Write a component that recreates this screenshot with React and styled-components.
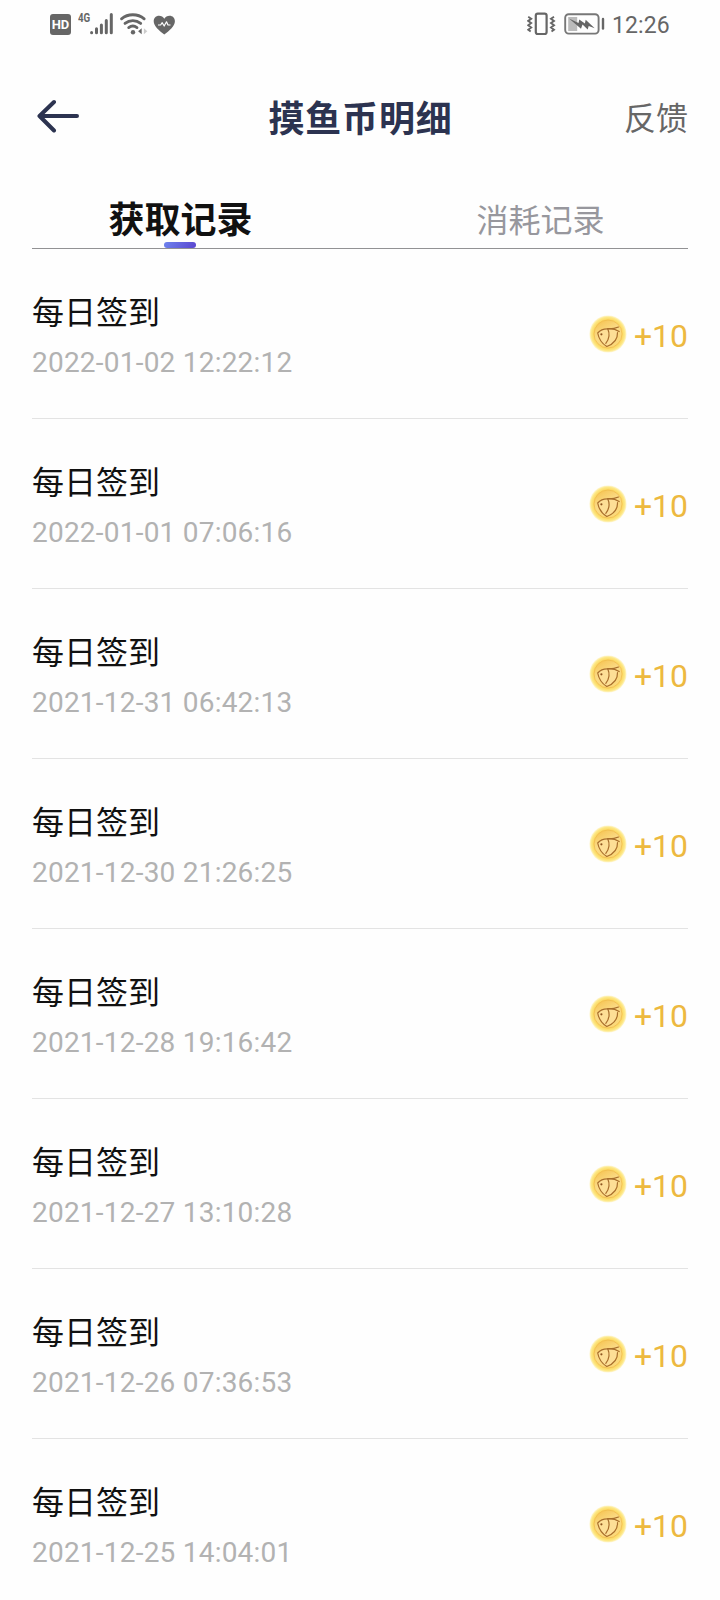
import styled, { createGlobalStyle } from "styled-components";

const records = [
  { id: 1, title: "每日签到", time: "2022-01-02 12:22:12", amount: 10 },
  { id: 2, title: "每日签到", time: "2022-01-01 07:06:16", amount: 10 },
  { id: 3, title: "每日签到", time: "2021-12-31 06:42:13", amount: 10 },
  { id: 4, title: "每日签到", time: "2021-12-30 21:26:25", amount: 10 },
  { id: 5, title: "每日签到", time: "2021-12-28 19:16:42", amount: 10 },
  { id: 6, title: "每日签到", time: "2021-12-27 13:10:28", amount: 10 },
  { id: 7, title: "每日签到", time: "2021-12-26 07:36:53", amount: 10 },
  { id: 8, title: "每日签到", time: "2021-12-25 14:04:01", amount: 10 },
];

const SignalIcons = () => (
  <svg width="85" height="26" viewBox="0 0 85 26" fill="none">
    <g stroke="#666" strokeWidth="3" strokeLinecap="round">
      <path d="M1.600 21.600v.2M6.500 17.800v4M11.400 14v7.800M16.300 9.400v12.400M21.300 3.600v18.200" />
    </g>
    <g stroke="#666" strokeWidth="2.800" strokeLinecap="round">
      <path d="M31.500 7.800c6.500-5.400 16.200-5.400 22.700 0" />
      <path d="M35 12.400c4.600-3.800 11.100-3.800 15.700 0" />
      <path d="M38.700 16.600c2.600-2 5.700-2 8.300 0" />
    </g>
    <circle cx="43" cy="21.200" r="2.200" fill="#666" />
    <path d="M51.700 17.300v6l-3.600-3z" fill="#666" />
    <path d="M53.900 17.300v6l3.400-3z" fill="#ccc" />
    <path
      d="M74.300 23.600C69 19.500 63.700 15 63.700 10.200c0-3.200 2.400-5.400 5.300-5.400 2.300 0 4.200 1.200 5.300 3 1.100-1.800 3-3 5.300-3 2.900 0 5.300 2.200 5.300 5.400 0 4.800-5.300 9.300-10.600 13.400z"
      fill="#666"
    />
    <path
      d="M68 14h2.600l1.600-2.300 2 3.300 2.300-4.200 1.500 3.200h2.500"
      stroke="#fff"
      strokeWidth="1.200"
      strokeLinejoin="round"
    />
  </svg>
);

const VibrateIcon = () => (
  <svg width="29" height="24" viewBox="0 0 29 24" fill="none" stroke="#666">
    <rect x="8.800" y="1.600" width="10.800" height="20.400" rx="2" strokeWidth="2.200" />
    <path
      d="M1.200 4.800l3 1.900-3 2.200 3 2.200-3 2.200 3 2.200-3 2.200 2.500 1.900M27 4.800l-3 1.900 3 2.200-3 2.200 3 2.200-3 2.200 3 2.200-2.500 1.900"
      strokeWidth="1.900"
    />
  </svg>
);

const BatteryIcon = () => (
  <svg width="42" height="24" viewBox="0 0 42 24" fill="none">
    <rect x="1.200" y="2.200" width="33.400" height="19.400" rx="3.500" stroke="#777" strokeWidth="1.900" />
    <rect x="4.200" y="5" width="9" height="14" fill="#bbb" />
    <path
      d="M5 6.600l9.500 4.400.8-3.400 5.600 4 .8-3.800 9 8.400-6-2.200-1 3.400-5.200-4.800-1.500 4.200z"
      fill="#666"
    />
    <path d="M39 7v9.600" stroke="#666" strokeWidth="2.400" strokeLinecap="round" />
  </svg>
);

const BackIcon = () => (
  <svg width="44" height="34" viewBox="0 0 44 34" fill="none">
    <path
      d="M40 17H2.500M17 3L2.500 17 17 31.500"
      stroke="#2c3350"
      strokeWidth="4"
      strokeLinecap="round"
      strokeLinejoin="round"
    />
  </svg>
);

const CoinIcon = () => (
  <svg width="38" height="38" viewBox="0 0 38 38" fill="none">
    <defs>
      <radialGradient id="coinEdge">
        <stop offset="0.78" stopColor="#fcd965" />
        <stop offset="0.9" stopColor="#fde886" />
        <stop offset="1" stopColor="#fff7d6" />
      </radialGradient>
      <linearGradient id="coinFace" x1="0.2" y1="0" x2="0.7" y2="1">
        <stop offset="0" stopColor="#f6c452" />
        <stop offset="0.45" stopColor="#fbdb86" />
        <stop offset="1" stopColor="#fbd877" />
      </linearGradient>
    </defs>
    <circle cx="19" cy="19" r="18.600" fill="url(#coinEdge)" />
    <circle cx="19" cy="19" r="14" fill="url(#coinFace)" stroke="#f0bd4e" strokeWidth="0.800" />
    <path
      d="M8.700 18c2.500-3 5.500-4.300 10-4.200 4 0 7 .7 9.600 2.500.3 7-3.500 12.500-10.500 15.200-5-3-8-7.500-9.100-13.500z"
      fill="#fddf96"
    />
    <g stroke="#a86e2c" strokeWidth="1.200" strokeLinecap="round" strokeLinejoin="round">
      <path d="M29.500 12c-3.500 1.500-7 2-10.800 1.800-4.500-.1-7.500 1.200-10 4.200 1.100 6 4.100 10.500 9.100 13.500 7-2.700 11-8 10.700-14" />
      <path d="M18.700 13.800c2.500 5.400 1.900 9.700-1.900 14.500" />
      <path d="M18.900 13.700c4.300-.3 8 .6 11.300 2.800" />
    </g>
    <circle cx="12.400" cy="19.300" r="1.100" fill="#8c5320" />
  </svg>
);

const App = () => {
  return (
    <StPage>
      <GlobalStyle />
      <StStatusBar>
        <StStatusGroup>
          <StHdBadge>HD</StHdBadge>
          <StNetwork>4G</StNetwork>
          <SignalIcons />
        </StStatusGroup>
        <StStatusGroup>
          <VibrateIcon />
          <StBattery>
            <BatteryIcon />
          </StBattery>
          <StClock>12:26</StClock>
        </StStatusGroup>
      </StStatusBar>

      <StHeader>
        <StBackButton aria-label="返回">
          <BackIcon />
        </StBackButton>
        <StTitle>摸鱼币明细</StTitle>
        <StFeedback>反馈</StFeedback>
      </StHeader>

      <StTabs>
        <StTabList>
          <StTab $active>获取记录</StTab>
          <StTab>消耗记录</StTab>
        </StTabList>
      </StTabs>

      <StList>
        {records.map((item) => {
          return (
            <StRow key={item.id}>
              <div>
                <StRowTitle>{item.title}</StRowTitle>
                <StRowTime>{item.time}</StRowTime>
              </div>
              <StAmount>
                <CoinIcon />
                <StAmountText>+{item.amount}</StAmountText>
              </StAmount>
            </StRow>
          );
        })}
      </StList>
    </StPage>
  );
};

export default App;

const GlobalStyle = createGlobalStyle`
  * {
    box-sizing: border-box;
  }
  body {
    margin: 0;
    background-color: #fefefe;
  }
  button {
    border: none;
    padding: 0;
    background: none;
    font-family: inherit;
    cursor: pointer;
  }
  svg {
    display: block;
    flex-shrink: 0;
  }
`;

const StPage = styled.div`
  width: 720px;
  height: 1600px;
  overflow: hidden;
  font-family: Roboto, "Noto Sans CJK SC", sans-serif;
`;

const StStatusBar = styled.div`
  height: 48px;
  display: flex;
  justify-content: space-between;
  padding: 0 49px 0 50px;
`;

const StStatusGroup = styled.div`
  display: flex;
  align-items: center;
`;

const StHdBadge = styled.div`
  width: 21px;
  height: 21px;
  margin-top: 1px;
  border-radius: 3px;
  background-color: #666;
  color: #fff;
  font-size: 13px;
  font-weight: 700;
  line-height: 22px;
  text-align: center;
`;

const StNetwork = styled.div`
  width: 12px;
  margin: 0 0 12px 7px;
  color: #666;
  font-size: 13px;
  font-weight: 700;
  line-height: 12px;
  transform: scaleX(0.75);
  transform-origin: left;
`;

const StBattery = styled.div`
  margin: 0 6px 0 8px;
`;

const StClock = styled.div`
  width: 59px;
  padding-top: 4px;
  color: #666;
  font-size: 23px;
  letter-spacing: 0.1px;
  line-height: 48px;
`;

const StHeader = styled.div`
  height: 136px;
  display: grid;
  grid-template-columns: 120px 1fr 120px;
  align-items: center;
  padding: 0 32px 0 37px;
`;

const StBackButton = styled.button`
  justify-self: start;
`;

const StTitle = styled.h1`
  margin: 0;
  padding: 8px 4px 0 0;
  color: #2c3350;
  font-size: 36px;
  font-weight: 700;
  letter-spacing: 0.8px;
  line-height: 52px;
  text-align: center;
`;

const StFeedback = styled.button`
  justify-self: end;
  padding-top: 6px;
  color: #666;
  font-size: 32px;
  line-height: 48px;
`;

const StTabs = styled.div`
  height: 65px;
  margin: 0 32px;
  border-bottom: 1px solid #929294;
`;

const StTabList = styled.div`
  height: 64px;
  display: flex;
  margin: 0 -32px;
`;

const StTab = styled.button`
  flex: 1;
  display: flex;
  flex-direction: column;
  align-items: center;
  justify-content: flex-end;
  color: ${({ $active }) => ($active ? "#111" : "#97979d")};
  font-size: ${({ $active }) => ($active ? "36px" : "32px")};
  font-weight: ${({ $active }) => ($active ? 600 : 400)};
  text-indent: 1px;
  line-height: 42px;

  &::after {
    content: "";
    width: 32px;
    height: 6px;
    border-radius: 3px;
    background: ${({ $active }) =>
      $active ? "linear-gradient(120deg, #6d83ee, #5a45cf)" : "transparent"};
  }
`;

const StList = styled.div`
  padding: 0 32px;
`;

const StRow = styled.div`
  height: 170px;
  display: flex;
  align-items: center;
  justify-content: space-between;
  border-bottom: 1px solid #e3e3e3;
`;

const StRowTitle = styled.div`
  margin-top: 6px;
  color: #111;
  font-size: 32px;
  line-height: 48px;
`;

const StRowTime = styled.div`
  margin-top: 5px;
  color: #b2b2b2;
  font-size: 28px;
  letter-spacing: 0.22px;
  line-height: 42px;
`;

const StAmount = styled.div`
  display: flex;
  align-items: center;
  gap: 7px;
  color: #edb93f;
  font-size: 32px;
`;

const StAmountText = styled.span`
  padding-top: 4px;
  line-height: 40px;
`;
